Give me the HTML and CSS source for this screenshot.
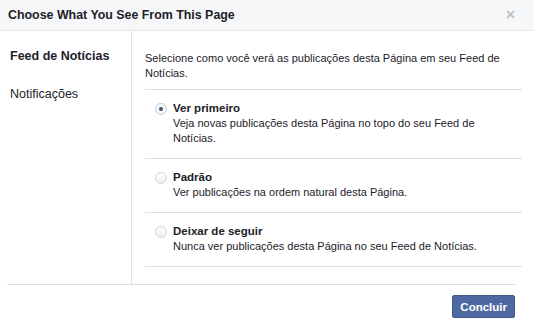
FILE: index.html
```html
<!DOCTYPE html>
<html lang="pt">
<head>
  <meta charset="utf-8" />
  <title>Choose What You See From This Page</title>
  <meta name="viewport" content="width=device-width, initial-scale=1" />
  <link rel="stylesheet" href="styles.css">
</head>
<body>
  <div class="dialog">
    <div class="header">
      <h1>Choose What You See From This Page</h1>
      <span class="close">&times;</span>
    </div>
    <div class="body">
      <ul class="nav">
        <li class="active">Feed de Notícias</li>
        <li>Notificações</li>
      </ul>
      <div class="content">
        <p class="intro">Selecione como você verá as publicações desta Página em seu Feed de Notícias.</p>
        <label class="option">
          <span class="radio checked"></span>
          <span class="text">
            <strong>Ver primeiro</strong>
            <span>Veja novas publicações desta Página no topo do seu Feed de Notícias.</span>
          </span>
        </label>
        <label class="option">
          <span class="radio"></span>
          <span class="text">
            <strong>Padrão</strong>
            <span>Ver publicações na ordem natural desta Página.</span>
          </span>
        </label>
        <label class="option">
          <span class="radio"></span>
          <span class="text">
            <strong>Deixar de seguir</strong>
            <span>Nunca ver publicações desta Página no seu Feed de Notícias.</span>
          </span>
        </label>
      </div>
    </div>
    <div class="footer">
      <button class="done">Concluir</button>
    </div>
  </div>
</body>
</html>
```

FILE: styles.css
```css
* {
  box-sizing: border-box;
  margin: 0;
  padding: 0;
}
body {
  font-family: "Liberation Sans", Arial, sans-serif;
  font-size: 11px;
  color: #1d2129;
  background: #fff;
}
.dialog {
  width: 533px;
  height: 324px;
}
.header {
  height: 31px;
  display: flex;
  justify-content: space-between;
  align-items: center;
  padding: 0 18px 1px 8px;
  background-color: #f6f7f9;
  border-bottom: 1px solid #e5e5e5;
}
h1 {
  font-size: 12.4px;
  font-weight: bold;
  color: #1d2129;
}
.close {
  font-size: 16px;
  line-height: 1;
  color: #bec2c9;
  font-weight: bold;
}
.body {
  display: flex;
  height: 253px;
}
.nav {
  list-style: none;
  width: 132px;
  padding-top: 6px;
  border-right: 1px solid #dddfe2;
  font-size: 12.5px;
}
.nav li {
  line-height: 16px;
  padding: 11px 10px;
}
.nav li.active {
  font-weight: bold;
}
.content {
  flex: 1;
  padding: 20px 11px 0 13px;
  line-height: 15px;
}
.intro {
  padding-bottom: 8px;
  border-bottom: 1px solid #dddfe2;
}
.option {
  display: flex;
  gap: 6px;
  padding: 11px 40px 12px 10px;
  border-bottom: 1px solid #dddfe2;
}
.text {
  display: flex;
  flex-direction: column;
}
.text strong {
  font-size: 11.5px;
}
.radio {
  flex: none;
  width: 12px;
  height: 12px;
  margin-top: 2px;
  border-radius: 50%;
  border: 1px solid #d3d6db;
  background: linear-gradient(#fff, #eceef1);
  display: flex;
  justify-content: center;
  align-items: center;
}
.radio.checked {
  border-color: #bcd0ec;
  background: #f5f8fd;
}
.radio.checked::after {
  content: "";
  width: 4px;
  height: 4px;
  border-radius: 50%;
  background-color: #4b4f56;
}
.footer {
  display: flex;
  justify-content: flex-end;
  margin: 0 18px 0 7px;
  padding-top: 10px;
  border-top: 1px solid #dddfe2;
}
.done {
  font-family: inherit;
  font-size: 11.5px;
  font-weight: bold;
  color: #fff;
  height: 23px;
  padding: 0 7px;
  background-color: #4e69a2;
  border: 1px solid #435a8b;
  border-radius: 2px;
}
```
